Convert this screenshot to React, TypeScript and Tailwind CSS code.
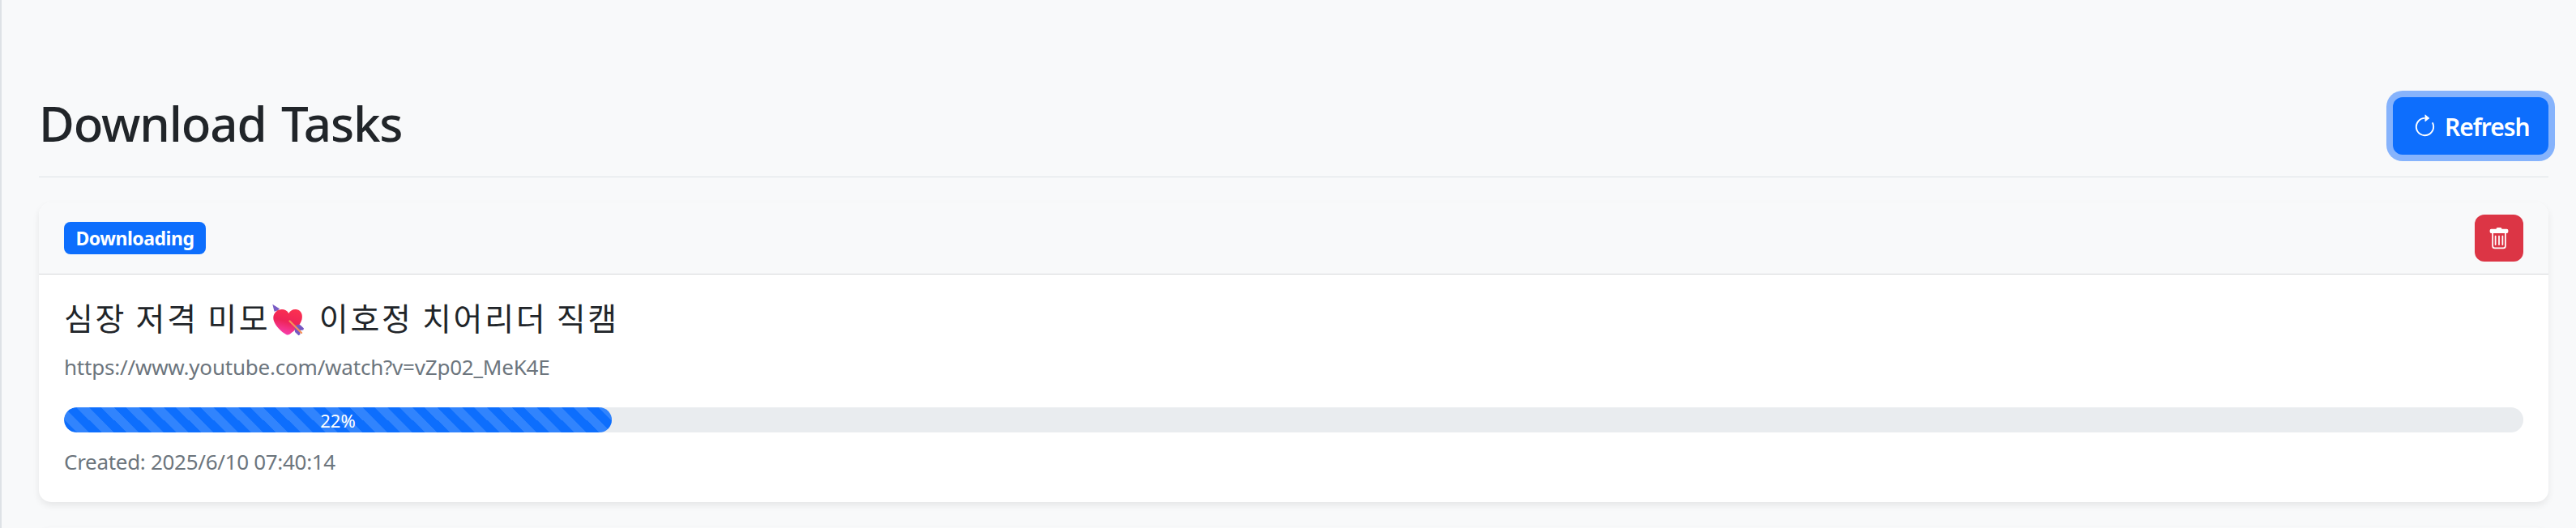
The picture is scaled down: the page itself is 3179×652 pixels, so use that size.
import { BsArrowClockwise } from "react-icons/bs";

function HeartWithArrow() {
  return (
    <svg role="img" aria-label="💘" viewBox="0 0 40 40" className="ml-[3px] mt-[9px] h-10 w-10 shrink-0">
      <defs>
        <linearGradient id="heart" x1="0.7" y1="0" x2="0.4" y2="1">
          <stop offset="0" stopColor="#fb3050" />
          <stop offset="0.5" stopColor="#ee2458" />
          <stop offset="1" stopColor="#f83fb0" />
        </linearGradient>
      </defs>
      <path d="M6 8L11 13" stroke="#f08a68" strokeWidth="1.8" />
      <path d="M0.3 0.8L9 6.2L7 8.3L2.6 9.8Z" fill="#7a5cc4" />
      <path
        d="M20.3 12C18 7.500 12.500 6 8 7.800C2.500 10 0 15.500 2 21.500C4.500 28.500 11 34.500 17 38Q19.300 39.200 21.500 37.800C27.500 33.500 34 27.500 36.500 19.500C38 13.500 35.500 8.500 30.500 7.300C26 6.300 22 8.500 20.300 12Z"
        fill="url(#heart)"
      />
      <path d="M27.500 28L32 25.800L34.500 26.200L39 30.500L38.300 32.500L34 33L34.500 38L32.500 39.300L28 35Z" fill="#7557c2" />
      <path d="M21.500 21.500L36 36" stroke="#f4915a" strokeWidth="2.400" strokeLinecap="round" />
    </svg>
  );
}

function TrashIcon() {
  return (
    <svg viewBox="0 0 16 16" fill="currentColor" className="mt-[2px] h-7 w-7">
      <path d="M5.500 5.500A.5.5 0 0 1 6 6v6a.5.5 0 0 1-1 0V6a.5.5 0 0 1 .5-.5m2.500 0a.5.5 0 0 1 .5.5v6a.5.5 0 0 1-1 0V6a.5.5 0 0 1 .5-.5m3 .5a.5.5 0 0 0-1 0v6a.5.5 0 0 0 1 0z" />
      <path d="M14.500 3a1 1 0 0 1-1 1H13v9a2 2 0 0 1-2 2H5a2 2 0 0 1-2-2V4h-.5a1 1 0 0 1-1-1V2a1 1 0 0 1 1-1H6a1 1 0 0 1 1-1h2a1 1 0 0 1 1 1h3.500a1 1 0 0 1 1 1zM4.118 4 4 4.059V13a1 1 0 0 0 1 1h6a1 1 0 0 0 1-1V4.059L11.882 4z" />
    </svg>
  );
}

export default function App() {
  return (
    <main className="h-[652px] w-full overflow-hidden border-l-2 border-[#dee2e6] bg-[#f8f9fa] pl-[46px] pr-[34px] pt-[120px] font-['Noto_Sans',sans-serif] text-[#212529]">
      <header className="flex h-[99px] items-start justify-between border-b border-[#dee2e6]">
        <h1 className="-mt-0.5 whitespace-nowrap text-[60px] font-medium leading-[68px] tracking-[-1.15px] [word-spacing:4px]">
          Download Tasks
        </h1>
        <button className="flex h-[71px] w-[192px] items-center rounded-xl bg-[#0d6efd] pl-6 text-[30px] font-semibold text-white shadow-[0_0_0_8px_#86b3fc]">
          <BsArrowClockwise className="mr-[9px] mt-px h-[31px] w-[31px] shrink-0" />
          <span className="pt-0.5 leading-none tracking-[-1.05px]">Refresh</span>
        </button>
      </header>

      <section className="mt-[31px] h-[370px] overflow-hidden rounded-[15px] bg-white shadow-[0_4px_8px_rgba(0,0,0,0.075)]">
        <div className="flex h-[89px] items-center justify-between border-b border-[#d6d8da] bg-[#f8f9fa] px-[31px]">
          <span className="flex h-10 w-[175px] items-center rounded-[8px] bg-[#0d6efd] pl-[14.5px] text-[23px] font-bold leading-none tracking-[-0.48px] text-white">
            Downloading
          </span>
          <button aria-label="Delete" className="flex h-[58px] w-[60px] items-center justify-center rounded-xl bg-[#dc3545] text-white">
            <TrashIcon />
          </button>
        </div>
        <div className="px-[31px] pt-[27px]">
          <h2 className="flex h-[50px] items-start font-['Noto_Sans_CJK_KR',sans-serif] text-[39px] font-normal leading-[50px] tracking-[2.7px]">
            <span className="whitespace-nowrap">심장 저격 미모</span>
            <HeartWithArrow />
            <span className="ml-[6px] whitespace-pre"> 이호정 치어리더 직캠</span>
          </h2>
          <p className="mt-[19px] text-[26px] leading-[36px] tracking-[-0.21px] text-[#6c757d]">
            https://www.youtube.com/watch?v=vZp02_MeK4E
          </p>
          <div className="mt-[32px] h-[31px] overflow-hidden rounded-full bg-[#e9ecef]">
            <div className="flex h-full w-[676px] items-center justify-center rounded-full bg-[#0d6efd] bg-[linear-gradient(45deg,rgba(255,255,255,.15)_25%,transparent_25%,transparent_50%,rgba(255,255,255,.15)_50%,rgba(255,255,255,.15)_75%,transparent_75%,transparent)] bg-[length:30.7px_31px] bg-[position:15.5px_0] text-[22px] leading-none text-white">
              22%
            </div>
          </div>
          <p className="mt-[18px] text-[26px] leading-[36px] tracking-[-0.3px] text-[#6c757d]">
            Created: 2025/6/10 07:40:14
          </p>
        </div>
      </section>
      <div className="mt-[31px] h-10 rounded-[15px] bg-[#f8f9fa] shadow-[0_4px_8px_rgba(0,0,0,0.075)]" />
    </main>
  );
}
